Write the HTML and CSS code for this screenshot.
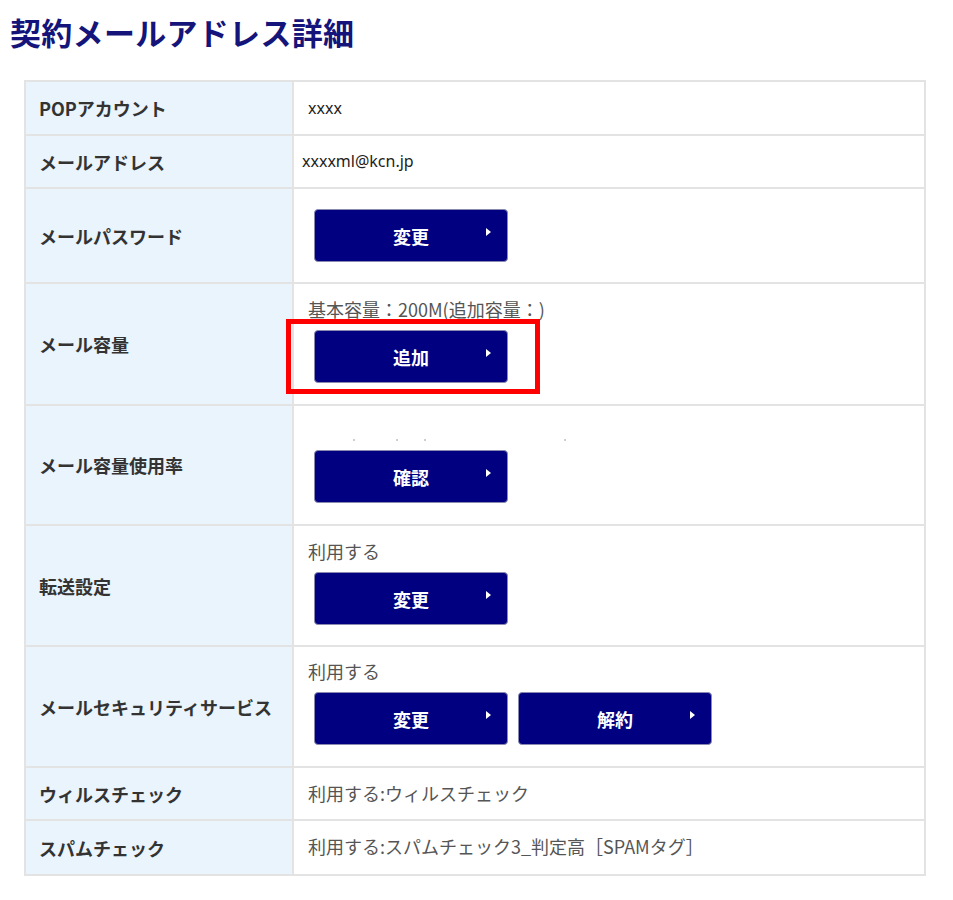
FILE: index.html
```html
<!DOCTYPE html>
<html lang="ja">
<head>
<meta charset="utf-8">
<title>契約メールアドレス詳細</title>
<link rel="stylesheet" href="styles.css">
</head>
<body>
<h1 class="title">契約メールアドレス詳細</h1>
<table class="detail">
  <tr class="r-first">
    <th>POPアカウント</th>
    <td><span class="latin">xxxx</span></td>
  </tr>
  <tr class="r-second">
    <th>メールアドレス</th>
    <td><span class="latin outdent">xxxxml@kcn.jp</span></td>
  </tr>
  <tr class="r-btn">
    <th>メールパスワード</th>
    <td><div class="btns"><a class="btn" href="#">変更</a></div></td>
  </tr>
  <tr class="r-text">
    <th>メール容量</th>
    <td>
      <div class="line">基本容量：200M(追加容量：)</div>
      <div class="btns"><span class="highlight"><a class="btn" href="#">追加</a></span></div>
    </td>
  </tr>
  <tr class="r-text r-dots">
    <th>メール容量使用率</th>
    <td>
      <div class="line dots"><i class="d d1"></i><i class="d d2"></i><i class="d d3"></i><i class="d d4"></i></div>
      <div class="btns"><a class="btn" href="#">確認</a></div>
    </td>
  </tr>
  <tr class="r-text r-six">
    <th>転送設定</th>
    <td>
      <div class="line">利用する</div>
      <div class="btns"><a class="btn" href="#">変更</a></div>
    </td>
  </tr>
  <tr class="r-text r-seven">
    <th>メールセキュリティサービス</th>
    <td>
      <div class="line">利用する</div>
      <div class="btns"><a class="btn" href="#">変更</a><a class="btn" href="#">解約</a></div>
    </td>
  </tr>
  <tr class="r-eighth">
    <th>ウィルスチェック</th>
    <td><span class="val">利用する:ウィルスチェック</span></td>
  </tr>
  <tr class="r-last">
    <th>スパムチェック</th>
    <td><span class="val">利用する:スパムチェック3_判定高［SPAMタグ］</span></td>
  </tr>
</table>
</body>
</html>
```

FILE: styles.css
```css
* { box-sizing: border-box; }

body {
  margin: 0;
  background: #fff;
  font-family: "Noto Sans CJK JP", "Noto Sans", sans-serif;
  color: #333;
}

.title {
  margin: 12px 0 0 10px;
  font-size: 31px;
  line-height: 40px;
  font-weight: 700;
  color: #14147a;
  letter-spacing: 0.3px;
}

.detail {
  margin: 28px 0 0 24px;
  width: 902px;
  border-collapse: collapse;
  border: 2px solid #e3e3e3;
}

.detail th,
.detail td {
  border: 2px solid #e3e3e3;
  vertical-align: middle;
}

.detail th {
  width: 268px;
  background: #e9f4fc;
  text-align: left;
  font-size: 18px;
  font-weight: 700;
  color: #333;
  padding: 0 0 0 13px;
  line-height: 24px;
  white-space: nowrap;
}

.detail td {
  padding: 0 0 0 14px;
  font-size: 18px;
  color: #555;
  line-height: 24px;
}

.r-first td { padding-top: 14px; padding-bottom: 14px; }
.r-second td { padding-top: 13px; padding-bottom: 14px; }
.r-btn td { padding-top: 20px; padding-bottom: 20px; }
.r-text td { padding-top: 13px; padding-bottom: 21px; }
.r-dots td { padding-top: 11px; padding-bottom: 21px; }
.r-six td { padding-bottom: 20px; }
.r-seven td { padding-top: 12px; padding-bottom: 21px; }
.r-eighth td { padding-top: 13px; padding-bottom: 14px; }
.r-last td { padding-top: 13px; padding-bottom: 16px; }

.latin {
  display: inline-block;
  vertical-align: top;
  height: 24px;
  line-height: 24px;
  font-family: "Noto Sans", sans-serif;
  font-size: 16px;
  color: #222;
}
.outdent { margin-left: -6px; }

.line {
  height: 24px;
  line-height: 24px;
  white-space: nowrap;
}

.dots { position: relative; }
.d {
  position: absolute;
  bottom: 0;
  width: 2px;
  height: 2px;
  border-radius: 1px;
  background: #b7bfce;
}
.d1 { left: 45px; }
.d2 { left: 88px; }
.d3 { left: 116px; }
.d4 { left: 256px; }

.btns {
  display: flex;
  gap: 10px;
  margin: 9px 0 0 6px;
}
.r-btn .btns { margin-top: 0; }

.highlight {
  position: relative;
  display: inline-flex;
}
.highlight::after {
  content: "";
  position: absolute;
  top: -11px;
  bottom: -11px;
  left: -28px;
  right: -32px;
  border: 5px solid #f00;
}

.btn {
  position: relative;
  display: inline-flex;
  align-items: center;
  justify-content: center;
  width: 194px;
  height: 53px;
  background: #000080;
  border: 1px solid #8a8ab0;
  border-radius: 4px;
  color: #fff;
  font-size: 18px;
  font-weight: 700;
  text-decoration: none;
  line-height: 1;
}
.btn::after {
  content: "";
  position: absolute;
  right: 16px;
  top: 18px;
  border-left: 5px solid #fff;
  border-top: 4px solid transparent;
  border-bottom: 4px solid transparent;
}

.val { font-size: 18px; color: #555; }
```
